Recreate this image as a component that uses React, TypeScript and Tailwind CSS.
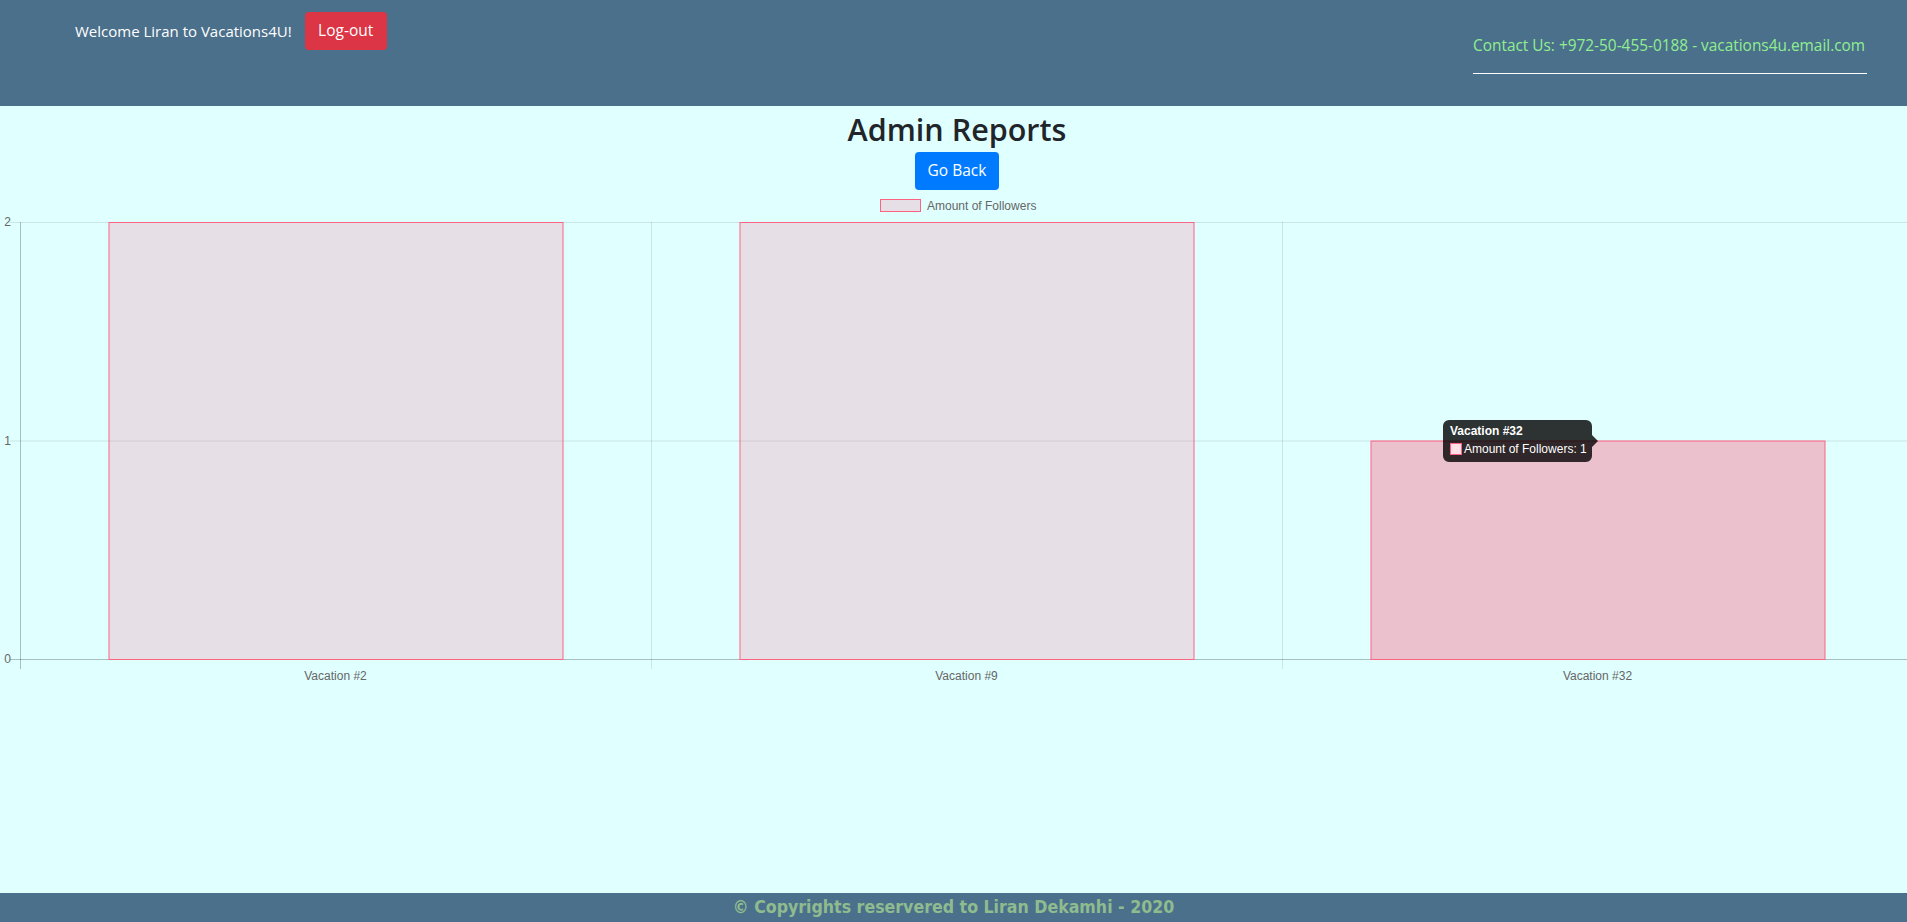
import React from "react";

const bars = [
  { label: "Vacation #2", value: 2 },
  { label: "Vacation #9", value: 2 },
  { label: "Vacation #32", value: 1 },
];

function FollowersChart() {
  const left = 20;
  const top = 222;
  const bottom = 659;
  const cat = 631;
  const barW = 454;
  const yOf = (v: number) => bottom - (v / 2) * (bottom - top);
  return (
    <svg
      width={1907}
      height={510}
      viewBox="0 194 1907 510"
      className="block"
      style={{ fontFamily: '"Liberation Sans", Arial, sans-serif' }}
    >
      {/* legend */}
      <rect x={880.5} y={199.5} width={40} height={12} fill="rgba(255,99,132,0.2)" stroke="#ff6384" />
      <text x={927} y={210} fontSize={12} fill="#666">
        Amount of Followers
      </text>

      {/* horizontal grid */}
      {[2, 1].map((v) => (
        <line key={v} x1={10} x2={1907} y1={yOf(v) + 0.5} y2={yOf(v) + 0.5} stroke="rgba(0,0,0,0.1)" />
      ))}
      <line x1={10} x2={1907} y1={bottom + 0.5} y2={bottom + 0.5} stroke="rgba(0,0,0,0.25)" />

      {/* vertical grid */}
      {[1, 2].map((i) => (
        <line
          key={i}
          x1={left + cat * i + 0.5}
          x2={left + cat * i + 0.5}
          y1={top}
          y2={bottom + 10}
          stroke="rgba(0,0,0,0.1)"
        />
      ))}
      <line x1={left + 0.5} x2={left + 0.5} y1={top} y2={bottom + 10} stroke="rgba(0,0,0,0.25)" />

      {/* y labels */}
      {[2, 1, 0].map((v) => (
        <text key={v} x={11} y={yOf(v) + 4} fontSize={12} fill="#666" textAnchor="end">
          {v}
        </text>
      ))}

      {/* bars */}
      {bars.map((b, i) => {
        const x = left + cat * i + (cat - barW) / 2;
        const y = yOf(b.value);
        const hover = i === 2;
        return (
          <g key={b.label}>
            <rect
              x={x + 0.5}
              y={y + 0.5}
              width={barW}
              height={bottom - y}
              fill={hover ? "rgba(255,99,132,0.4)" : "rgba(255,99,132,0.2)"}
              stroke="#ff6384"
            />
            <text x={left + cat * i + cat / 2} y={680} fontSize={12} fill="#666" textAnchor="middle">
              {b.label}
            </text>
          </g>
        );
      })}

      {/* tooltip */}
      <g>
        <path
          d="M1449 420 H1586 a6 6 0 0 1 6 6 V435 L1598 441 L1592 447 V456 a6 6 0 0 1 -6 6 H1449 a6 6 0 0 1 -6 -6 V426 a6 6 0 0 1 6 -6 Z"
          fill="rgba(0,0,0,0.8)"
        />
        <text x={1450} y={435} fontSize={12} fontWeight="bold" fill="#fff">
          Vacation #32
        </text>
        <rect x={1450.5} y={443.5} width={11} height={11} fill="#fff" />
        <rect x={1450.5} y={443.5} width={11} height={11} fill="rgba(255,99,132,0.2)" stroke="#ff6384" />
        <text x={1464} y={453} fontSize={12} fill="#fff">
          Amount of Followers: 1
        </text>
      </g>
    </svg>
  );
}

export default function App() {
  return (
    <div
      className="min-h-screen flex flex-col bg-[#e0ffff]"
      style={{ fontFamily: '"Open Sans", "Noto Sans", sans-serif' }}
    >
      {/* Header */}
      <header className="h-[106px] bg-[#4b708b] flex justify-between">
        <div className="flex items-start pl-[75px] pt-3">
          <span className="text-white text-[15px] mt-[8px]">Welcome Liran to Vacations4U!</span>
          <button
            type="button"
            className="ml-[13px] bg-[#dc3545] text-white text-[15.5px] w-[82px] h-[38px] rounded"
          >
            Log-out
          </button>
        </div>
        <div className="pr-[40px] pt-[36px]">
          <p className="text-[#90ee90] text-[15.4px] leading-5 pb-[17px] border-b border-white w-[394px]">
            Contact Us: +972-50-455-0188 - vacations4u.email.com
          </p>
        </div>
      </header>

      {/* Content */}
      <main className="flex flex-col items-center">
        <h1 className="text-[30.5px] font-semibold text-[#212529] leading-[40px] mt-[3px] ml-[7px]">Admin Reports</h1>
        <button
          type="button"
          className="mt-[3px] ml-[7px] bg-[#007bff] text-white text-[15.5px] w-[84px] h-[38px] rounded"
        >
          Go Back
        </button>
        <div className="mt-[4px] self-stretch">
          <FollowersChart />
        </div>
      </main>

      <footer className="mt-auto h-[29px] bg-[#4b708b] flex items-center justify-center">
        <span
          className="text-[#8fbc8f] font-bold text-[17.6px]"
          style={{ fontFamily: '"DejaVu Sans Condensed", "Liberation Sans", sans-serif' }}
        >
          © Copyrights reservered to Liran Dekamhi - 2020
        </span>
      </footer>
    </div>
  );
}
